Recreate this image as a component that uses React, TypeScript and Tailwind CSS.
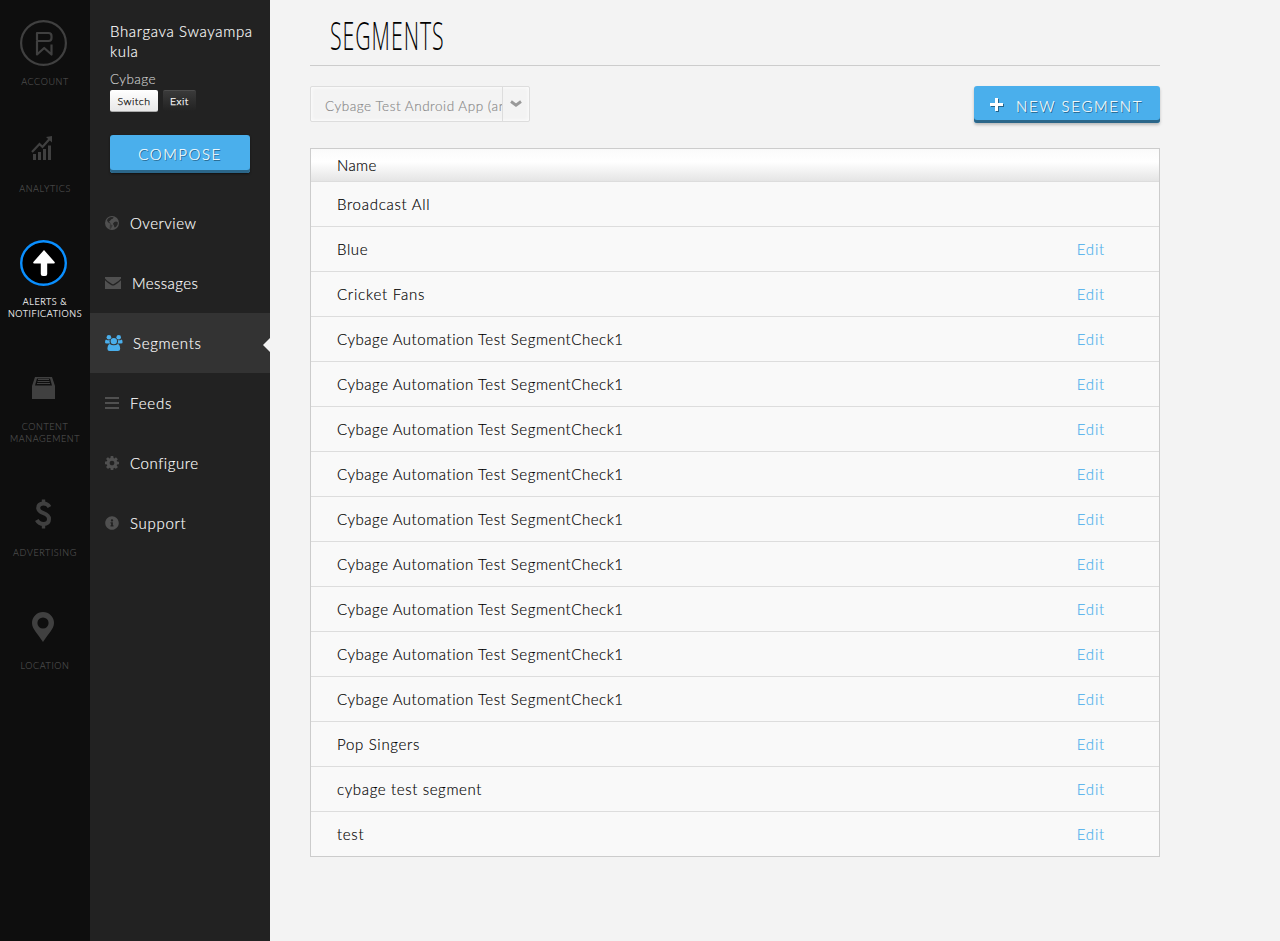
import React from "react";
import { FaInfoCircle } from "react-icons/fa";

const body = "font-['Lato',sans-serif] font-light [-webkit-text-stroke:.15px]";

function Rail({ top, label, active, children }: { top: string; label: string[]; active?: boolean; children: React.ReactNode }) {
  return (
    <a className={`${top} flex w-[90px] flex-col items-center`}>
      <span className="flex h-[48px] w-[87px] items-center justify-center self-start">{children}</span>
      <span className={`mt-[9px] text-center text-[9px] leading-[12px] tracking-[.62px] uppercase ${active ? "text-white" : "text-[#4d4d4d]"}`}>
        {label.map((l) => <span key={l} className="block">{l}</span>)}
      </span>
    </a>
  );
}

const Globe = () => (
  <svg width="14" height="14" viewBox="0 0 14 14"><circle cx="7" cy="7" r="7" fill="#505050" /><path d="M5.2 1.2 7.2 1l1.5.6-1 1.2-1.4.4-1.2 1.5-1 .6.3 1 1.3 1-.3.4L3 6.2 2 4.2l1-1.8zM9.3 6l1.8-.5 1.7.8-.2 2.2-1.6 2.6-1.5.5-.6-2.2-1-1.6z" fill="#262626" /><path d="m5 8 2.6 1.2-.8 2L5.6 13l-1-.8z" fill="#383838" /></svg>
);
const Mail = () => (
  <svg width="16" height="12" viewBox="0 0 16 12" fill="#505050"><path d="M0 0H16V1.5Q14 4.2 8.9 7.1Q8 7.6 7.1 7.1Q2 4.2 0 1.5Z" /><path d="M0 3.3Q2.5 6 6.5 8.2Q8 9 9.5 8.2Q13.5 6 16 3.3V12H0Z" /></svg>
);
const Users = () => (
  <svg width="18" height="16" viewBox="0 0 18 16" fill="#4aafec">
    <circle cx="3.9" cy="2.3" r="2.3" /><circle cx="13.7" cy="2.3" r="2.3" />
    <path d="M1 4.5q2.2 1.3 3.8.6Q4 7 5.2 8.6H1.5Q0 8.6 0 7.2 0 5 1 4.5M16.6 4.5q-2.2 1.3-3.8.6.8 1.9-.4 3.5h3.7q1.5 0 1.5-1.4 0-2.2-1-2.7" />
    <circle cx="8.8" cy="6.1" r="3.2" />
    <path d="M4.8 9q1.6 1.2 4 1.2t4-1.2q2.2.8 2.4 4.8 0 2.2-2.2 2.2H4.6q-2.2 0-2.2-2.2Q2.600 9.800 4.800 9" />
  </svg>
);
const Bars = () => (
  <svg width="14" height="12" viewBox="0 0 14 12" fill="#505050"><path d="M0 0h14v2H0zM0 5h14v2H0zM0 10h14v2H0z" /></svg>
);
const Cog = () => (
  <svg width="14" height="14" viewBox="0 128 1536 1536" fill="#505050"><path d="M1024 896q0-106-75-181t-181-75-181 75-75 181 75 181 181 75 181-75 75-181zm512-109v222q0 12-8 23t-20 13l-185 28q-19 54-39 91 35 50 107 138 10 12 10 25t-9 23q-27 37-99 108t-94 71q-12 0-26-9l-138-108q-44 23-91 38-16 136-29 186-7 28-36 28H657q-14 0-24.5-8.5T621 1634l-28-184q-49-16-90-37l-141 107q-10 9-25 9-14 0-25-11-126-114-165-168-7-10-7-23 0-12 8-23 15-21 51-66.5t54-70.5q-27-50-41-99L29 1041q-13-2-21-12.5T0 995V773q0-12 8-23t19-13l186-28q14-46 39-92-40-57-107-138-10-12-10-24 0-10 9-23 26-36 98.5-107.5T337 276q13 0 26 10l138 107q44-23 91-38 16-136 29-186 7-28 36-28h222q14 0 24.5 8.5T915 171l28 184q49 16 90 37l142-107q9-9 24-9 13 0 25 10 129 119 165 170 7 8 7 22 0 12-8 23-15 21-51 66.5t-54 70.5q26 50 41 98l183 28q13 2 21 12.5t8 23.5z" /></svg>
);

const nav = [
  { label: "Overview", icon: <Globe />, gap: "gap-[11px]", ls: "tracking-[.5px]" },
  { label: "Messages", icon: <Mail />, gap: "gap-[11px]", ls: "tracking-[.4px]" },
  { label: "Segments", icon: <Users />, gap: "gap-[10px]", ls: "tracking-[.7px]", active: true },
  { label: "Feeds", icon: <Bars />, gap: "gap-[11px]", ls: "tracking-[.8px]" },
  { label: "Configure", icon: <Cog />, gap: "gap-[11px]", ls: "tracking-[.55px]" },
  { label: "Support", icon: <FaInfoCircle size={14} color="#505050" />, gap: "gap-[11px]", ls: "tracking-[.7px]" },
];

const rows = [
  { name: "Broadcast All", ls: "tracking-[.72px]" },
  { name: "Blue", ls: "tracking-[.6px]" },
  { name: "Cricket Fans", ls: "tracking-[.8px]" },
  ...Array.from({ length: 9 }, () => ({ name: "Cybage Automation Test SegmentCheck1", ls: "tracking-[.54px]" })),
  { name: "Pop Singers", ls: "tracking-[.7px]" },
  { name: "cybage test segment", ls: "tracking-[.63px]" },
  { name: "test", ls: "tracking-[.7px]" },
];

export default function App() {
  return (
    <div className={`${body} flex h-[941px] w-[1280px] overflow-hidden bg-[#f3f3f3] text-[15px] text-black`}>
      <aside className="w-[90px] shrink-0 bg-[#0e0e0e]">
        <Rail top="mt-[19px]" label={["Account"]}>
          <svg width="47" height="46" viewBox="0 0 47 46" fill="none" stroke="#404040"><ellipse cx="23.5" cy="23" rx="22.4" ry="21.9" strokeWidth="2.2" /><path d="M17 20V13H28.500q3 0 3 3v2q0 3-3 3H17V34.500l7.200-6.500 7.300 6.500V24.500" strokeWidth="2.2" strokeLinejoin="round" /></svg>
        </Rail>
        <Rail top="mt-[38px]" label={["Analytics"]}>
          <svg className="mr-[3px] mb-[5px]" width="22" height="26" viewBox="0 0 22 26" fill="#404040"><path d="M2 19h3v6H2zM7 17h3v8H7zM12 14h3v11h-3zM17 10.500h3V25h-3z" /><path d="M1 17 8.500 9l3 3L19 3.500" fill="none" stroke="#404040" strokeWidth="2.200" /><path d="M21 1v6.500L15 2z" /></svg>
        </Rail>
        <Rail top="mt-[44px]" active label={["Alerts &", "Notifications"]}>
          <svg width="47" height="46" viewBox="0 0 47 46"><ellipse cx="23.5" cy="23" rx="22.3" ry="21.8" fill="#000" stroke="#0a8fff" strokeWidth="2.400" /><path d="M24 10 34.600 22q.8 1.500-.8 1.500H27.200v10.500q0 2-2 2h-2.400q-2 0-2-2V23.500h-6.600q-1.600 0-.8-1.500Z" fill="#fff" /></svg>
        </Rail>
        <Rail top="mt-[44px]" label={["Content", "Management"]}>
          <svg width="23" height="24" viewBox="0 0 23 24" fill="#404040"><path d="M3 1h17l3 9v13H0V10z" /><path d="M5 2.500h13l2 7H3z" fill="#0e0e0e" /><path d="M6 3h11v1H6zM5.500 5h12v1h-12zM5 7h13v1H5z" /></svg>
        </Rail>
        <Rail top="mt-[45px]" label={["Advertising"]}>
          <svg width="17" height="30" viewBox="0 0 17 30" fill="none" stroke="#404040"><path d="M14.500 8Q12.500 4.500 8.500 4.500Q3.200 4.500 3.200 9Q3.200 12.300 8.500 14.200Q14 16.200 14 20Q14 25 8.500 25Q4 25 1.800 21" strokeWidth="4" /><path d="M8.500 .5v4M8.500 25v4.500" strokeWidth="3.400" /></svg>
        </Rail>
        <Rail top="mt-[44px]" label={["Location"]}>
          <svg className="mr-px" width="22" height="30" viewBox="0 0 22 30"><path fill="#404040" fillRule="evenodd" d="M11 0a11 11 0 0 1 11 11c0 6-6 11-11 19C6 22 0 17 0 11A11 11 0 0 1 11 0m0 5.400a5.600 5.600 0 1 0 0 11.200 5.600 5.600 0 0 0 0-11.200" /></svg>
        </Rail>
      </aside>

      <aside className="w-[180px] shrink-0 bg-[#222] text-white">
        <div className="h-[193px] pt-[21px] pl-5">
          <div className="leading-5 tracking-[.64px]">Bhargava Swayampa<br />kula</div>
          <div className="mt-[8px] text-[13.5px] leading-5 tracking-[.4px] text-[#ccc]">Cybage</div>
          <div className="mt-px flex gap-[5px] text-[10.5px] leading-[22px] tracking-[.5px]">
            <button className="h-[22px] w-12 rounded-[2px] border-b border-[#aaa] bg-linear-to-b from-white to-[#e8e8e8] text-[#111] [-webkit-text-stroke:.25px]">Switch</button>
            <button className="h-[21px] w-[33px] rounded-[2px] border-t border-[#4b4b4b] bg-linear-to-b from-[#3a3a3a] to-[#222] leading-[21px] [-webkit-text-stroke:.25px]">Exit</button>
          </div>
          <button className="mt-[23px] h-[38px] w-[140px] rounded-[3px] bg-[#4aafec] text-[15px] leading-[39px] tracking-[1.55px] shadow-[inset_0_-3px_0_#2b6689,0_1px_2px_#111] [text-shadow:1px_1px_0_#25638a]">COMPOSE</button>
        </div>
        <nav>
          {nav.map((n) => (
            <a key={n.label} className={`relative flex h-[60px] items-center pl-[15px] ${n.gap} ${n.active ? "bg-[#333]" : ""}`}>
              {n.icon}
              <span className={`text-[15px] leading-5 ${n.ls}`}>{n.label}</span>
              {n.active && <svg className="absolute top-[25px] right-0" width="7" height="14" viewBox="0 0 7 14"><path d="M7 0v14L0 7z" fill="#f3f3f3" /></svg>}
            </a>
          ))}
        </nav>
      </aside>

      <main className="w-[890px] shrink-0 pl-10">
        <h1 className="h-[66px] border-b border-[#ccc] pt-[8px] pl-5">
          <span className="block w-fit origin-left scale-x-[.56] font-['Open_Sans',sans-serif] text-[38px] leading-[54px] font-light tracking-[1.7px] [-webkit-text-stroke:0]">SEGMENTS</span>
        </h1>
        <div className="mt-5 flex justify-between">
          <div className="flex h-9 w-[220px] rounded-[2px] border border-[#ddd] shadow-[inset_0_0_4px_#fff]">
            <span className="w-[192px] overflow-hidden border-r border-[#ddd] pl-[14px] text-[13.5px] leading-[39px] tracking-[.53px] whitespace-nowrap text-[#888]">Cybage Test Android App (android)</span>
            <span className="flex flex-1 items-start justify-center pt-[13px]"><svg width="12" height="8" viewBox="0 0 12 8" fill="none" stroke="#999" strokeWidth="2.8"><path d="m1 1.500 5 3.700 5-3.700" /></svg></span>
          </div>
          <button className="flex h-[37px] w-[186px] items-center rounded-[3px] bg-[#4aafec] pl-4 text-white shadow-[inset_0_-3px_0_#2b6689,0_2px_3px_#bbb] [text-shadow:1px_1px_0_#25638a]">
            <svg width="14" height="14" viewBox="0 0 14 14"><path d="M6 1h3v5h5v3H9v5H6V9H1V6h5z" fill="#25638a" /><path d="M5 0h3v5h5v3H8v5H5V8H0V5h5z" fill="#fff" /></svg>
            <span className="mt-[2px] ml-3 text-[15px] leading-5 tracking-[1.65px] whitespace-nowrap">NEW SEGMENT</span>
          </button>
        </div>
        <section className="mt-[25px] border border-[#ccc] bg-[#f9f9f9]">
          <div className="h-[33px] border-b border-[#ddd] bg-linear-to-b from-[#fafafa] via-white via-40% to-[#e5e5e5] pl-[26px] leading-[33px] tracking-[.4px]">Name</div>
          {rows.map((r, i) => (
            <div key={i} className="flex h-[45px] justify-between border-b border-[#ddd] pr-[54px] pl-[26px] leading-[45px] last:h-[44px] last:border-0">
              <span className={r.ls}>{r.name}</span>
              {i > 0 && <a className="tracking-[.8px] text-[#4aafec]">Edit</a>}
            </div>
          ))}
        </section>
      </main>
    </div>
  );
}
